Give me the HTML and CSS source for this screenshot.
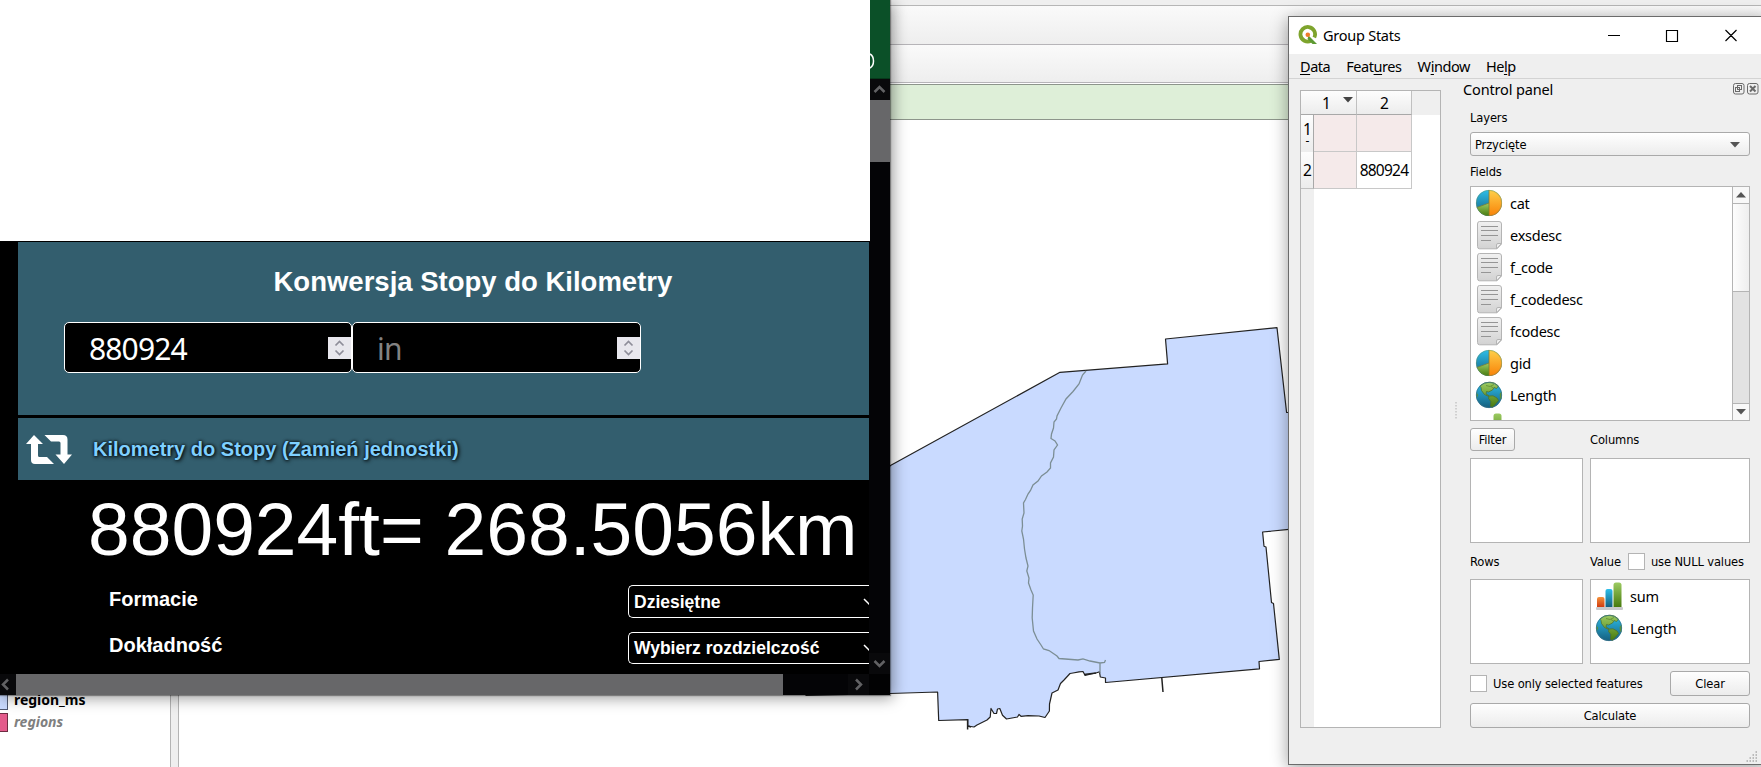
FILE: index.html
```html
<!DOCTYPE html>
<html lang="pl">
<head>
<meta charset="utf-8">
<title>Group Stats</title>
<link rel="stylesheet" href="styles.css">
</head>
<body>
<svg class="defs" aria-hidden="true">
  <defs>
    <linearGradient id="gOrange" x1="0" y1="0" x2="0" y2="1"><stop offset="0" stop-color="#fdd04a"/><stop offset="1" stop-color="#f98208"/></linearGradient>
    <linearGradient id="gBlue" x1="0" y1="0" x2="0" y2="1"><stop offset="0" stop-color="#2dbfea"/><stop offset="1" stop-color="#155f7f"/></linearGradient>
    <linearGradient id="gGreen" x1="0" y1="0" x2="0" y2="1"><stop offset="0" stop-color="#9ccb62"/><stop offset="1" stop-color="#477a0d"/></linearGradient>
    <linearGradient id="gRed" x1="0" y1="0" x2="0" y2="1"><stop offset="0" stop-color="#f5923a"/><stop offset="1" stop-color="#cf3c10"/></linearGradient>
    <linearGradient id="gPage" x1="0" y1="0" x2="0" y2="1"><stop offset="0" stop-color="#f1f1f1"/><stop offset="1" stop-color="#d2d2d2"/></linearGradient>
  </defs>
  <symbol id="pie" viewBox="0 0 28 28">
    <circle cx="14" cy="14" r="13" fill="url(#gBlue)"/>
    <path d="M14 14V27A13 13 0 0 1 1.8 18.6Z" fill="url(#gGreen)"/>
    <path d="M14 1A13 13 0 0 1 14 27Z" fill="url(#gOrange)"/>
    <path d="M14 1V27M14 14L1.8 18.6" stroke="#7d7c33" stroke-width=".8" fill="none"/>
    <circle cx="14" cy="14" r="12.7" fill="none" stroke="#6c8b58" stroke-opacity=".6" stroke-width=".7"/>
  </symbol>
  <symbol id="page" viewBox="0 0 28 30">
    <path d="M4.5 1.5H24Q26.500 1.500 26.500 4V24L22 28.800H4.500Q2.500 28.800 2.500 26.500V4Q2.500 1.500 4.500 1.500Z" fill="url(#gPage)" stroke="#b4b4b4"/>
    <path d="M26.500 23.500H23Q21.500 23.500 21.500 25V28.800Z" fill="#f0f0f0" stroke="#b4b4b4"/>
    <path d="M6 6.500H23M6 10.500H23M6 15.500H23M6 20.500H16" stroke="#959595" fill="none"/>
  </symbol>
  <symbol id="globe" viewBox="0 0 28 28">
    <circle cx="14" cy="14" r="13" fill="url(#gBlue)"/>
    <path d="M4.800 5Q9 1 15 1.100Q20 1.300 23.500 5L21.500 7.500L19 6.500L17.500 9L13.500 11L11.500 10.500L11 13L14.500 15L18 14.800L22 17L23.500 19.500L20.500 23L17.500 26.400L15.500 25.500L15.800 20.500L13.500 17.500L14 15.600L9.500 13.500L6.500 9.500L6 6.500Z" fill="url(#gGreen)" stroke="#4d6d27" stroke-width=".7"/>
    <path d="M1.300 11L3.200 14L1.600 17.500ZM26.700 10.500L24.600 13L25 17.500L26.500 18Z" fill="#5c9138"/>
    <path d="M11 4.500L15 5.500L19 3.500M16 5.500L18.500 7" stroke="#5e8a34" stroke-width=".8" fill="none"/>
    <circle cx="14" cy="14" r="12.700" fill="none" stroke="#39718a" stroke-width=".7"/>
  </symbol>
  <symbol id="bars" viewBox="0 0 28 30">
    <rect x="1" y="26" width="27" height="3" rx="1" fill="#c9c9cc"/>
    <path d="M2 26V18Q2 16 4 16H7.500Q9.500 16 9.500 18V26Z" fill="url(#gRed)"/>
    <path d="M10.500 26V10Q10.500 8 12.500 8H15.500Q17.500 8 17.500 10V26Z" fill="url(#gBlue)"/>
    <path d="M18.500 26V4Q18.500 1.500 21 1.500H24Q26.500 1.500 26.500 4V26Z" fill="url(#gGreen)"/>
  </symbol>
</svg>

<div class="desktop">
  <main class="qgis">
    <div class="strip"></div>
    <div class="toolbar first"></div>
    <div class="toolbar second"></div>
    <div class="message"></div>
    <div class="workspace">
      <aside class="layers">
        <div class="layer"><i class="swatch blue"></i><b>region_ms</b></div>
        <div class="layer"><i class="swatch pink"></i><b class="off">regions</b></div>
      </aside>
      <div class="splitter"></div>
      <svg class="map" viewBox="180 120 1581 647">
        <path d="M806 695.500L890 465.700L1060 372.300L1167.600 363.900L1165.500 339L1277 327.700L1286.600 412.500H1320V526L1289 529.300L1262.600 532L1264 546.300L1266 547L1271.500 602.500L1273.500 603.500L1279.300 659.400L1259 661.500L1259.500 668.800L1105.500 682.500V678L1100.300 677L1099.500 671.800L1096 673L1091 674L1085 675.300L1083 671.500L1079 671.900L1073 673L1070 673.500L1064 680L1060.500 683.500L1058 690L1052 693L1049.500 704L1049.400 711L1045 717.500L1039 716L1028 715.600L1021 716.300L1019 714.500L1017.500 717L1006.500 719L1002.500 715.300L999.800 708.500L997.500 709L996.500 713.500L994 713.500L991 708.500L990.200 717L987 720L977 725L974 727L967.700 726V719.600L938.700 720.500L937.600 692L890 693.500Z" fill="#c9daff" stroke="#222" stroke-width="1.200" stroke-linejoin="round"/>
        <path d="M967.600 719V729.500M968 726L971 727M1161.800 678L1163 692M1084 674.500L1096 673" fill="none" stroke="#222" stroke-width="1.500"/>
        <path d="M1086 371L1082.500 375L1079 384L1073 391.500L1066 399L1061 408L1057 416L1056.500 419L1054 422L1053.500 428L1051.500 434L1051 438.500L1055 441L1057.500 445L1054 450L1053.500 457L1050.500 463L1050.500 468L1047 472L1041.500 476L1038 481L1033 485L1030.500 490.500L1028 494L1025.500 499.500L1023.500 503L1024 513L1022.200 519L1022.500 526L1021.800 531L1023.500 539L1024.500 549L1026 558L1028 566L1026.800 571L1029 578L1028.500 583L1031 590L1033.200 595L1032.500 608L1032.200 618L1033.500 631L1037 639L1041 645L1043.500 649L1049 650.500L1057 656L1059 658.500L1078 660L1083 658.800L1090 661L1100 663L1104.500 662.500L1105.500 660M1100 663V673" fill="none" stroke="#7c8e95" stroke-width="1.300"/>
      </svg>
    </div>
  </main>

  <section class="browser">
    <div class="page">
      <div class="blank"></div>
      <div class="converter">
        <div class="card form">
          <h2>Konwersja Stopy do Kilometry</h2>
          <div class="inputs">
            <div class="num"><span>880924</span><svg class="spin" viewBox="0 0 23 22"><path d="M7.500 8.500L11.500 4.500L15.500 8.500M7.500 13.500L11.500 17.500L15.500 13.500"/></svg></div>
            <div class="num second-num"><span class="hint">in</span><svg class="spin" viewBox="0 0 23 22"><path d="M7.500 8.500L11.500 4.500L15.500 8.500M7.500 13.500L11.500 17.500L15.500 13.500"/></svg></div>
          </div>
        </div>
        <div class="card swap">
          <svg viewBox="0 0 46 30"><path d="M8 0L17 9H12V20.500Q12 22 13.500 22H21L28 29H9Q5 29 5 25V9H0ZM18.500 0H37Q41.500 0 41.500 4.500V19.500H46L38 29L29.500 19.500H34.500V8Q34.500 6.500 33 6.500H25Z"/></svg>
          <a>Kilometry do Stopy (Zamień jednostki)</a>
        </div>
        <div class="result">880924ft= 268.5056km</div>
        <div class="option"><label>Formacie</label><div class="select"><span class="low">Dziesiętne</span><svg viewBox="0 0 12 8"><path d="M1 1L6 6L11 1"/></svg></div></div>
        <div class="option next"><label>Dokładność</label><div class="select"><span>Wybierz rozdzielczość</span><svg viewBox="0 0 12 8"><path d="M1 1L6 6L11 1"/></svg></div></div>
      </div>
      <div class="hscroll">
        <svg class="hl" viewBox="0 0 16 21"><path d="M8 5.500L3 10.500L8 15.500"/></svg>
        <div class="hthumb"></div>
        <div class="htrack"></div>
        <svg class="hr" viewBox="0 0 21 21"><path d="M8 5.500L13 10.500L8 15.500"/></svg>
      </div>
    </div>
    <div class="edge">
      <div class="green"><svg viewBox="0 0 21 79"><path d="M1 54Q4.500 56 4.500 61Q4.500 66 1 68"/></svg></div>
      <svg class="arrow" viewBox="0 0 21 21"><path d="M5.500 13L10.500 8L15.500 13"/></svg>
      <div class="vthumb"></div>
      <div class="vtrack"></div>
      <svg class="arrow" viewBox="0 0 21 21"><path d="M5.500 8L10.500 13L15.500 8"/></svg>
      <div class="corner"></div>
    </div>
  </section>

  <section class="dialog">
    <header class="titlebar">
      <svg class="logo" viewBox="0 0 20 20"><path d="M13 15.800A7.300 7.300 0 1 1 16.300 12.500" fill="none" stroke="#7ea42d" stroke-width="3.800"/><path d="M10.500 10.500L19 19H14.500L9.500 14Z" fill="#5d9a34"/><circle cx="9.800" cy="9.800" r="2.300" fill="#ee7c2c"/></svg>
      <span>Group Stats</span>
      <svg class="controls" viewBox="0 0 130 13"><path d="M0 6.500H12M58.500 1.500H69.500V12.500H58.500ZM117.500 1L128.500 12M128.500 1L117.500 12" fill="none" stroke="#000" stroke-width="1.150"/></svg>
    </header>
    <nav class="menu"><span><u>D</u>ata</span><span>Feat<u>u</u>res</span><span>W<u>i</u>ndow</span><span>He<u>l</u>p</span></nav>
    <div class="content">
      <div class="table">
        <div class="hcell sorted">1<svg viewBox="0 0 10 6"><path d="M0 0H10L5 5.500Z"/></svg></div><div class="hcell">2</div><div class="filler"></div>
        <div class="rcell first">1<small>-</small></div><div class="cell rose"></div><div class="cell rose"></div><div></div>
        <div class="rcell">2</div><div class="cell rose"></div><div class="cell">880924</div><div></div>
        <div class="filler"></div>
      </div>
      <svg class="grip" viewBox="0 0 2 17"><path d="M1 0V17"/></svg>
      <div class="panel">
        <div class="ptitle"><span>Control panel</span>
          <svg viewBox="0 0 26 12"><rect x=".5" y=".5" width="10.500" height="10.500" rx="2"/><rect x="4.500" y="2.500" width="4" height="4"/><rect x="2.500" y="4.500" width="4" height="4"/><rect x="14.500" y=".5" width="10.500" height="10.500" rx="2"/><path d="M17 3L22.500 8.500M22.500 3L17 8.500" stroke-width="2"/></svg>
        </div>
        <div class="body">
          <div class="lab layers-lab">Layers</div>
          <div class="combo"><span>Przycięte</span><svg viewBox="0 0 10 6"><path d="M0 0H10L5 5.500Z"/></svg></div>
          <div class="lab fields-lab">Fields</div>
          <div class="list">
            <div class="items">
              <div class="item"><svg><use href="#pie"/></svg>cat</div>
              <div class="item"><svg><use href="#page"/></svg>exsdesc</div>
              <div class="item"><svg><use href="#page"/></svg>f_code</div>
              <div class="item"><svg><use href="#page"/></svg>f_codedesc</div>
              <div class="item"><svg><use href="#page"/></svg>fcodesc</div>
              <div class="item"><svg><use href="#pie"/></svg>gid</div>
              <div class="item"><svg><use href="#globe"/></svg>Length</div>
              <div class="item"><svg><use href="#bars"/></svg></div>
            </div>
            <div class="scroll">
              <div class="sb"><svg viewBox="0 0 10 6"><path d="M0 5.500H10L5 0Z"/></svg></div>
              <div class="sthumb"></div><div class="strough"></div>
              <div class="sb down"><svg viewBox="0 0 10 6"><path d="M0 0H10L5 5.500Z"/></svg></div>
            </div>
          </div>
          <div class="pair heads"><div><button class="btn filter">Filter</button></div><div class="lab">Columns</div></div>
          <div class="pair boxes"><div class="box"></div><div class="box"></div></div>
          <div class="pair mids"><div class="lab">Rows</div><div class="lab value">Value<i class="check"></i>use NULL values</div></div>
          <div class="pair boxes"><div class="box"></div><div class="box"><div class="item"><svg><use href="#bars"/></svg>sum</div><div class="item"><svg><use href="#globe"/></svg>Length</div></div></div>
          <div class="foot"><div class="lab"><i class="check"></i>Use only selected features</div><button class="btn clear">Clear</button></div>
          <button class="btn calc">Calculate</button>
        </div>
      </div>
    </div>
    <svg class="sizegrip" viewBox="0 0 12 12"><path d="M9.500 1H11M6.500 4H8M9.500 4H11M3.500 7H5M6.500 7H8M9.500 7H11M.5 10H2M3.500 10H5M6.500 10H8M9.500 10H11"/></svg>
  </section>
</div>
</body>
</html>
```
FILE: styles.css
```css
* { box-sizing: border-box; }
body { margin: 0; overflow: hidden; background: #fff; }
svg { display: block; }
.defs { position: absolute; width: 0; height: 0; }
.desktop { position: relative; width: 1761px; height: 767px; overflow: hidden; }

/* Main application behind the windows */
.qgis { display: flex; flex-direction: column; height: 767px; }
.strip { height: 6px; background: #efefef; border-bottom: 1px solid #b6b6b6; }
.toolbar { background: linear-gradient(#fafafa, #eeeeee); border-bottom: 1px solid #b6b4b8; }
.first { height: 39px; }
.second { height: 38px; }
.message { height: 36px; margin-top: 1px; background: #deefd8; border: 1px solid #8d958b; border-width: 1px 0; }
.workspace { flex: 1; display: flex; }
.layers { width: 170px; padding-top: 569px; }
.layer { display: flex; align-items: center; height: 22px; font: 14px/20px "Noto Sans", sans-serif; letter-spacing: -.02px; }
.layer b { margin-left: 6px; }
.layer .off { color: #808080; font-style: italic; }
.swatch { width: 8px; height: 19px; border: 1px solid #4f5870; border-left: 0; }
.blue { background: #c9daff; }
.pink { background: #e35b8b; border-color: #6d2c42; }
.splitter { width: 9px; background: #efefef; border: 1px solid #b4b4b4; border-width: 0 1px; }
.map { width: 1581px; height: 647px; margin-left: 1px; flex: none; }

/* Browser window with the converter */
.browser { position: absolute; left: 0; top: 0; width: 890px; height: 695px; display: flex; background: #000; box-shadow: 0 0 1px 1px rgba(0,0,0,.35), 3px 3px 14px rgba(0,0,0,.4); }
.page { width: 869px; height: 695px; display: flex; flex-direction: column; }
.blank { width: 870px; height: 241px; background: #fff; flex: none; z-index: 1; }
.converter { height: 433px; padding: 1px 0 0 18px; overflow: hidden; font-family: "Liberation Sans", Arial, sans-serif; color: #fff; }
.card { background: #335e6e; }
.form { height: 173px; padding-top: 24px; }
.form h2 { margin: 0 0 24px 255.5px; font-size: 27.5px; line-height: 32px; white-space: nowrap; }
.inputs { display: flex; margin-left: 46px; }
.num { display: flex; align-items: center; justify-content: space-between; width: 288px; height: 51px; border: 1px solid #fff; border-radius: 5px; background: #000; padding-left: 24px; font: 30px/40px "Noto Sans", sans-serif; letter-spacing: -.85px; }
.second-num { width: 289px; }
.num span { padding-top: 2px; }
.num .hint { color: #828282; letter-spacing: -.7px; }
.spin { width: 23px; height: 22px; background: #e8e7ed; fill: none; stroke: #8e8d99; stroke-width: 1.700; }
.swap { display: flex; align-items: center; height: 62px; margin-top: 3px; padding: 0 0 0 8px; }
.swap svg { width: 46px; height: 30px; fill: #fff; margin-right: 21px; margin-top: 2px; }
.swap a { font-size: 20px; line-height: 24px; font-weight: bold; color: #7fd0ff; text-shadow: 1px 1px 4px #000, 0 0 3px #000; }
.result { margin: 11px 0 0 70px; font-size: 75px; line-height: 76px; white-space: nowrap; }
.option { display: flex; align-items: center; justify-content: space-between; margin: 18px 0 0 91px; height: 33px; font-size: 20px; font-weight: bold; }
.option.next { margin-top: 14px; }
.option label { padding-bottom: 5px; }
.option.next label { padding-bottom: 7px; }
.select { flex: none; display: flex; align-items: center; justify-content: space-between; width: 241px; height: 33px; border: 1px solid #fff; border-right: 0; border-radius: 5px 0 0 5px; padding-left: 5px; font-size: 17.500px; overflow: hidden; }
.next .select { height: 32px; margin-bottom: 1px; }
.low { padding-top: 1px; }
.select svg { width: 12px; height: 8px; margin-right: -6px; fill: none; stroke: #fff; stroke-width: 1.500; flex: none; }
.hscroll { display: flex; height: 21px; }
.hscroll svg, .arrow { fill: none; stroke: #626264; stroke-width: 2.500; background: #09090b; height: 21px; }
.hl { width: 16px; }
.hthumb { width: 767px; background: #676769; }
.htrack { width: 65px; background: #040406; }
.hr { width: 21px; }
.edge { width: 21px; display: flex; flex-direction: column; background: #040406; }
.green { height: 79px; background: #0b5028; border-bottom: 1px solid #063a1b; }
.green svg { width: 21px; height: 79px; fill: none; stroke: #fff; stroke-width: 1.500; }
.arrow { width: 21px; }
.vthumb { height: 62px; background: #676769; }
.vtrack { flex: 1; }
.corner { height: 21px; background: #020203; }

/* Group Stats window */
.dialog { position: absolute; left: 1288px; top: 16px; width: 480px; height: 749px; border: 1px solid #6b6b6b; background: #efefef; box-shadow: 0 3px 16px rgba(0,0,0,.38); font: 14.500px/20px "Noto Sans", sans-serif; letter-spacing: -.55px; color: #000; }
.titlebar { height: 37px; display: flex; align-items: center; background: #fff; padding-left: 9px; }
.logo { width: 20px; height: 20px; margin-right: 5px; margin-top: -2px; }
.titlebar span { width: 285px; letter-spacing: -.25px; padding-bottom: 2px; }
.controls { width: 130px; height: 13px; margin-top: -1px; }
.menu { height: 25px; display: flex; align-items: center; border-bottom: 1px solid #d3d3d3; padding-left: 11px; letter-spacing: -.45px; }
.menu span { margin-right: 16px; }
.menu u { text-underline-offset: 2px; }
.content { display: flex; padding-left: 11px; height: 649px; }
.table { width: 141px; height: 638px; margin-top: 11px; border: 1px solid #b4b4b4; background: #fff; display: grid; grid-template-columns: 13px 43px 55px 1fr; grid-template-rows: 24px 37px 37px 1fr; font-size: 15.500px; letter-spacing: -.75px; }
.hcell, .rcell { background: linear-gradient(#fdfdfd, #ececec); border: 1px solid #c0c0c0; border-width: 0 1px 1px 0; display: flex; align-items: center; justify-content: center; }
.hcell { border-bottom-color: #a8a8a8; }
.sorted { grid-column: 1 / 3; gap: 13px; padding-left: 18px; }
.sorted svg { width: 10px; height: 6px; margin-top: -5px; fill: #444; }
.filler { background: #efefef; }
.rcell { border-right-color: #a8a8a8; }
.rcell.first { flex-direction: column; line-height: 14px; padding-bottom: 1px; }
.rcell small { font-size: 12px; line-height: 10px; }
.cell { border: 1px solid #c8c8c8; border-width: 0 1px 1px 0; display: flex; align-items: center; justify-content: center; }
.rose { background: #f5eaea; }
.grip { width: 2px; height: 17px; margin: 323px 6px 0 14px; stroke: #b0b0b0; stroke-dasharray: 1.500 1.500; }
.panel { width: 298px; }
.ptitle { height: 20px; display: flex; align-items: center; justify-content: space-between; letter-spacing: -.15px; }
.ptitle svg { width: 26px; height: 12px; fill: none; stroke: #6a6a6a; margin-top: -1px; margin-right: 2px; }
.body { width: 280px; margin-left: 7px; display: flex; flex-direction: column; }
.lab, .combo, .btn { font: 12.800px/18px "DejaVu Sans Condensed", "DejaVu Sans", sans-serif; letter-spacing: -.13px; color: #000; }
.lab { display: flex; align-items: center; white-space: nowrap; }
.layers-lab { height: 25px; margin-top: 6px; }
.combo { height: 24px; margin-top: 2px; display: flex; align-items: center; justify-content: space-between; padding: 1px 9px 0 4px; border: 1px solid #a9a9a9; border-radius: 3px; background: linear-gradient(#fff, #ececec); }
.combo svg, .sb svg { width: 10px; height: 6px; fill: #555; }
.fields-lab { height: 22px; margin: 5px 0 3px; }
.list { height: 235px; display: flex; border: 1px solid #b4b4b4; background: #fff; }
.items { flex: 1; overflow: hidden; }
.item { height: 32px; display: flex; align-items: center; padding-left: 4px; letter-spacing: -.25px; }
.item svg { width: 28px; height: 30px; margin-right: 7px; }
.scroll { width: 17px; border-left: 1px solid #b4b4b4; display: flex; flex-direction: column; }
.sb { height: 17px; display: flex; align-items: center; justify-content: center; background: #f8f8f8; border-bottom: 1px solid #b4b4b4; }
.sb.down { border-bottom: 0; border-top: 1px solid #b4b4b4; }
.sthumb { height: 88px; background: linear-gradient(90deg, #fdfdfd, #eee); border-bottom: 1px solid #b4b4b4; }
.strough { flex: 1; background: #e2e2e2; }
.pair { display: grid; grid-template-columns: 113px 160px; column-gap: 7px; }
.heads { margin-top: 7px; height: 23px; }
.heads .lab { padding-top: 1px; }
.btn { display: block; margin: 0; padding: 1px 0 0; border: 1px solid #a9a9a9; border-radius: 3px; background: linear-gradient(#fefefe, #ececec); }
.filter { width: 45px; height: 23px; }
.boxes { height: 85px; margin-top: 7px; }
.box { border: 1px solid #b4b4b4; background: #fff; }
.mids { height: 22px; margin-top: 7px; }
.mids .lab { padding-top: 1px; }
.check { width: 17px; height: 17px; border: 1px solid #b4b4b4; background: #fff; margin-right: 6px; flex: none; }
.value .check { margin-left: 7px; margin-top: -1px; }
.foot { display: flex; align-items: center; justify-content: space-between; margin-top: 7px; height: 25px; }
.clear { width: 80px; height: 25px; }
.calc { width: 280px; height: 25px; margin-top: 7px; }
.sizegrip { position: absolute; right: 9px; bottom: 1px; width: 12px; height: 12px; stroke: #aaa; stroke-width: 1.300; }
```
